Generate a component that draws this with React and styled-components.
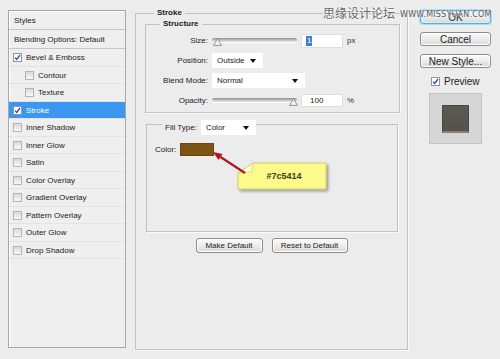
import React from 'react';
import styled, { createGlobalStyle } from 'styled-components';

const Global = createGlobalStyle`
  html, body { margin: 0; padding: 0; background: #ececec; }
  body { font-family: "Liberation Sans", Arial, sans-serif; color: #1a1a1a; }
  * { box-sizing: border-box; }
`;

const Dialog = styled.div`
  position: relative;
  width: 500px;
  height: 359px;
  display: flex;
  align-items: flex-start;
  padding: 8px 0 0 8px;
  background: #ececec;
  overflow: hidden;
  font-size: 8px;
`;

/* ---------- left styles list ---------- */
const StylesPanel = styled.div`
  width: 118px;
  height: 338px;
  margin-top: 2px;
  border: 1px solid #a6a6a6;
  background: #efefef;
  display: flex;
  flex-direction: column;
  box-shadow: inset 1px 1px 0 #fff;
`;

const HeadRow = styled.div`
  height: ${p => p.$h}px;
  display: flex;
  align-items: center;
  padding-left: 5px;
  border-bottom: 1px solid #c6c6c6;
  font-size: 8px;
  color: #222;
`;

const StyleRow = styled.div`
  height: 17px;
  display: flex;
  align-items: center;
  gap: 4px;
  padding-left: ${p => (p.$indent ? 16 : 4)}px;
  border-bottom: 1px solid #e3e3e3;
  font-size: 8px;
  background: ${p => (p.$active ? '#3c97f0' : 'transparent')};
  color: ${p => (p.$active ? '#fff' : '#222')};
  &:nth-child(odd) { height: 18px; }
`;

const Box = styled.span`
  position: relative;
  width: 9px;
  height: 9px;
  flex: none;
  border: 1px solid ${p => (p.$checked ? '#8c96a8' : '#b4b4b4')};
  background: ${p => (p.$checked ? '#fff' : 'linear-gradient(#dadada, #f8f8f8)')};
  display: inline-flex;
  align-items: center;
  justify-content: center;
`;

const Check = () => (
  <svg width="7" height="7" viewBox="0 0 7 7">
    <path d="M1 3.6 L2.7 5.5 L6 1" fill="none" stroke="#2b4e9c" strokeWidth="1.3" />
  </svg>
);

const CheckBox = ({ checked }) => <Box $checked={checked}>{checked && <Check />}</Box>;

/* ---------- main group ---------- */
const Group = styled.fieldset`
  margin: 0;
  min-width: 0;
  border: 1px solid #c2c2c2;
  box-shadow: 1px 1px 0 #fafafa;
  position: relative;
`;

const StrokeGroup = styled(Group)`
  width: 273px;
  height: 342px;
  margin-left: 9px;
  padding: 1px 7px 0 9px;
  display: flex;
  flex-direction: column;
`;

const Legend = styled.legend`
  font-weight: bold;
  font-size: 8px;
  line-height: 10px;
  padding: 0 3px;
  margin-left: ${p => p.$ml}px;
  color: #222;
`;

const StructureGroup = styled(Group)`
  width: 255px;
  height: 94px;
  padding: 4px 0 0 0;
`;

const FormGrid = styled.div`
  display: grid;
  grid-template-columns: 62px auto;
  column-gap: 4px;
  row-gap: 5px;
  align-items: center;
`;

const Label = styled.span`
  text-align: right;
  font-size: 8px;
  color: #222;
`;

const Controls = styled.div`
  display: flex;
  align-items: center;
  height: 15px;
`;

const Track = styled.div`
  position: relative;
  width: ${p => p.$w}px;
  height: 15px;
  &::before {
    content: '';
    position: absolute;
    left: 0; right: 0; top: 5px;
    height: 4px;
    border-radius: 2px;
    background: linear-gradient(#8e8e8e, #c8c8c8 60%, #e6e6e6);
    box-shadow: 0 1px 0 #fff;
  }
`;

const Thumb = styled.svg`
  position: absolute;
  top: 5px;
  left: ${p => p.$x}px;
`;

const Slider = ({ w, x }) => (
  <Track $w={w}>
    <Thumb $x={x} width="9" height="8" viewBox="0 0 9 8">
      <path d="M4.5 0.6 L8.4 7.4 L0.6 7.4 Z" fill="#f4f4f4" stroke="#8a8a8a" strokeWidth="0.9" />
    </Thumb>
  </Track>
);

const NumInput = styled.div`
  width: 42px;
  height: ${p => (p.$h ? p.$h : 14)}px;
  margin-left: 4px;
  background: #fff;
  border: 1px solid #dedede;
  display: flex;
  align-items: center;
  padding-left: ${p => (p.$sel ? 4 : 8)}px;
  font-size: 8px;
  color: #222;
`;

const Selected = styled.span`
  background: #3d7fd6;
  color: #fff;
  padding: 0 1px;
  line-height: 10px;
`;

const Unit = styled.span`
  margin-left: 4px;
  font-size: 8px;
  color: #333;
`;

const Select = styled.div`
  position: relative;
  width: ${p => p.$w}px;
  height: 15px;
  background: #fff;
  display: flex;
  align-items: center;
  padding-left: 5px;
  font-size: 8px;
  color: #222;
  &::after {
    content: '';
    position: absolute;
    right: 7px;
    top: 6px;
    border-left: 3px solid transparent;
    border-right: 3px solid transparent;
    border-top: 4px solid #111;
  }
`;

const FillGroup = styled(Group)`
  width: 252px;
  height: 118px;
  margin: 1px 0 0 1px;
  padding: 8px 0 0 0;
`;

const FillLegend = styled.legend`
  margin-left: 15px;
  padding: 6px 0 0 3px;
  font-size: 8px;
  color: #222;
`;

const LegendInner = styled.div`
  display: flex;
  align-items: center;
  gap: 4px;
`;

const ColorRow = styled.div`
  display: flex;
  align-items: center;
  gap: 4px;
  padding-left: 8px;
  font-size: 8px;
  color: #222;
`;

const Swatch = styled.div`
  width: 34px;
  height: 13px;
  background: #7c5414;
  border: 1px solid #6a460e;
`;

const Callout = styled.svg`
  position: absolute;
  left: 61px;
  top: -2px;
  overflow: visible;
`;

const Note = styled.div`
  position: absolute;
  left: 91px;
  top: 28px;
  width: 88px;
  height: 26px;
  display: flex;
  align-items: center;
  justify-content: center;
  padding-left: 4px;
  font-size: 9px;
  font-weight: bold;
  color: #3a3a20;
`;

const ButtonRow = styled.div`
  display: flex;
  justify-content: center;
  gap: 9px;
  margin-top: 6px;
  margin-left: -2px;
`;

const Button = styled.div`
  width: ${p => p.$w}px;
  height: ${p => (p.$h ? p.$h : 15)}px;
  display: flex;
  align-items: center;
  justify-content: center;
  border: 1px solid ${p => (p.$default ? '#5aaee0' : '#8c8c8c')};
  border-radius: 3px;
  background: linear-gradient(#fbfbfb, #ececec 50%, #d9d9d9);
  box-shadow: ${p => (p.$default ? '0 0 0 1px #a8dcf5, inset 0 0 0 1px #cdeefc' : 'inset 0 0 0 1px #fff')};
  font-size: ${p => (p.$big ? 10 : 8)}px;
  color: #222;
`;

/* ---------- right column ---------- */
const Side = styled.div`
  width: 71px;
  margin: 2px 0 0 12px;
  display: flex;
  flex-direction: column;
  gap: 8px;
`;

const PreviewCheck = styled.div`
  display: flex;
  align-items: center;
  gap: 4px;
  margin: 0 0 0 11px;
  font-size: 10px;
  color: #222;
  height: 10px;
`;

const PreviewBox = styled.div`
  width: 53px;
  height: 51px;
  margin: -1px 0 0 9px;
  background: #d6d6d6;
  border: 1px solid #c4c4c4;
  display: flex;
  align-items: center;
  justify-content: center;
`;

const PreviewSquare = styled.div`
  width: 27px;
  height: 28px;
  background: linear-gradient(#5c5853, #55514c);
  border: 1px solid #4a4642;
  border-bottom: 2px solid #8a8078;
`;

/* ---------- watermark ---------- */
const Watermark = styled.div`
  position: absolute;
  top: 4px;
  left: 323px;
  display: flex;
  align-items: center;
  gap: 5px;
  pointer-events: none;
`;

const WmCn = styled.span`
  font-family: "Noto Sans CJK SC", sans-serif;
  font-size: 12px;
  color: #666;
  text-shadow: 0 0 2px #fff, 0 0 2px #fff;
`;

const WmEn = styled.span`
  font-family: "DejaVu Sans", sans-serif;
  font-size: 8px;
  color: #555;
  letter-spacing: 0.2px;
  margin-top: 3px;
  text-shadow: 0 0 1px #fff, 0 0 2px #dff4ff;
`;

const styleItems = [
  { name: 'Bevel & Emboss', checked: true },
  { name: 'Contour', indent: true },
  { name: 'Texture', indent: true },
  { name: 'Stroke', checked: true, active: true },
  { name: 'Inner Shadow' },
  { name: 'Inner Glow' },
  { name: 'Satin' },
  { name: 'Color Overlay' },
  { name: 'Gradient Overlay' },
  { name: 'Pattern Overlay' },
  { name: 'Outer Glow' },
  { name: 'Drop Shadow' },
];

export default function App() {
  return (
    <>
      <Global />
      <Dialog>
        <StylesPanel>
          <HeadRow $h={19}>Styles</HeadRow>
          <HeadRow $h={19}>Blending Options: Default</HeadRow>
          {styleItems.map(s => (
            <StyleRow key={s.name} $indent={s.indent} $active={s.active}>
              <CheckBox checked={s.checked} />
              {s.name}
            </StyleRow>
          ))}
        </StylesPanel>

        <StrokeGroup>
          <Legend $ml={9}>Stroke</Legend>
          <StructureGroup>
            <Legend $ml={14}>Structure</Legend>
            <FormGrid>
              <Label>Size:</Label>
              <Controls>
                <Slider w={85} x={1} />
                <NumInput $sel><Selected>1</Selected></NumInput>
                <Unit>px</Unit>
              </Controls>
              <Label>Position:</Label>
              <Controls><Select $w={51}>Outside</Select></Controls>
              <Label>Blend Mode:</Label>
              <Controls><Select $w={93}>Normal</Select></Controls>
              <Label>Opacity:</Label>
              <Controls>
                <Slider w={85} x={77} />
                <NumInput $h={13}>100</NumInput>
                <Unit>%</Unit>
              </Controls>
            </FormGrid>
          </StructureGroup>

          <FillGroup>
            <FillLegend>
              <LegendInner>
                Fill Type:
                <Select $w={55}>Color</Select>
              </LegendInner>
            </FillLegend>
            <ColorRow>
              Color:
              <Swatch />
            </ColorRow>
            <Callout width="130" height="60" viewBox="0 0 130 60">
              <defs>
                <filter id="sh" x="-20%" y="-30%" width="150%" height="180%">
                  <feDropShadow dx="2" dy="2" stdDeviation="1.5" floodColor="#000" floodOpacity="0.35" />
                </filter>
              </defs>
              <path d="M45 30 L118 30 L118 56 L30 56 L30 40 Z" fill="#fbfa8a" stroke="#c9c45a" strokeWidth="0.8" filter="url(#sh)" />
              <path d="M45 30 L30 40 L44 39 Z" fill="#fdfdc8" stroke="#c9c45a" strokeWidth="0.6" />
              <line x1="37" y1="40" x2="12.5" y2="24" stroke="#b3171b" strokeWidth="2.2" />
              <path d="M5 19 L14.5 21.1 L10.5 26.9 Z" fill="#b3171b" />
            </Callout>
            <Note>#7c5414</Note>
          </FillGroup>

          <ButtonRow>
            <Button $w={67}>Make Default</Button>
            <Button $w={76}>Reset to Default</Button>
          </ButtonRow>
        </StrokeGroup>

        <Side>
          <Button $w={71} $h={14} $big $default>OK</Button>
          <Button $w={71} $h={14} $big>Cancel</Button>
          <Button $w={71} $h={14} $big>New Style...</Button>
          <PreviewCheck>
            <CheckBox checked />
            Preview
          </PreviewCheck>
          <PreviewBox>
            <PreviewSquare />
          </PreviewBox>
        </Side>

        <Watermark>
          <WmCn>思缘设计论坛</WmCn>
          <WmEn>WWW.MISSYUAN.COM</WmEn>
        </Watermark>
      </Dialog>
    </>
  );
}
